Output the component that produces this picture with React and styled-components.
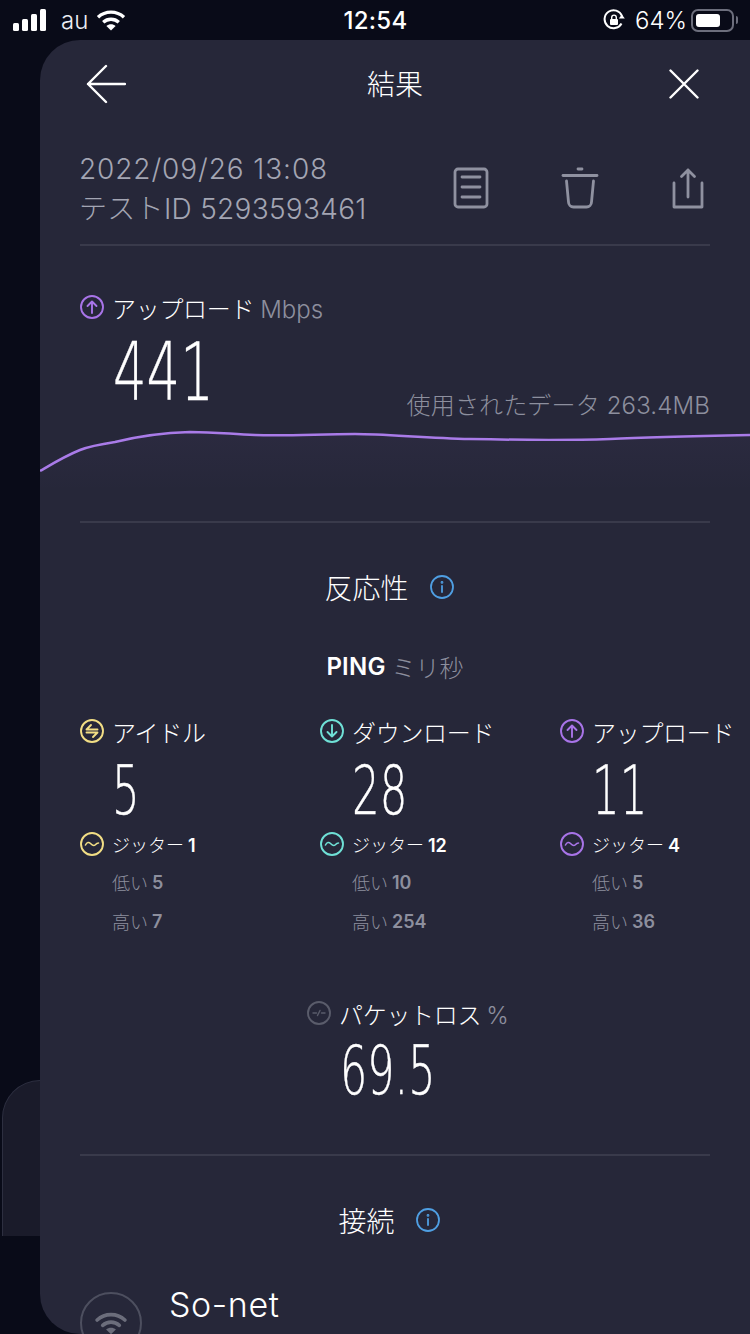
import styled, { createGlobalStyle } from "styled-components";

const GlobalStyle = createGlobalStyle`
  html, body {
    margin: 0;
    padding: 0;
    background: #090b18;
  }
  body {
    width: 750px;
    height: 1334px;
    overflow: hidden;
    font-family: "Inter", "Noto Sans CJK JP", sans-serif;
  }
`;

const Screen = styled.div`
  position: relative;
  width: 750px;
  height: 1334px;
  overflow: hidden;
  background: #090b18;
  color: #fff;
`;

const StatusBar = styled.div`
  display: grid;
  grid-template-columns: 1fr auto 1fr;
  align-items: center;
  height: 40px;
  padding: 0 12px 0 13px;
`;

const StatusLeft = styled.div`
  display: flex;
  align-items: center;
`;

const StatusRight = styled.div`
  display: flex;
  align-items: center;
  justify-content: flex-end;
`;

const Carrier = styled.span`
  margin: 0 8px 0 14px;
  font-size: 24px;
  font-weight: 300;
  color: #eceef4;
`;

const Clock = styled.span`
  font-size: 24px;
  font-weight: 500;
  letter-spacing: 0.3px;
`;

const BatteryPct = styled.span`
  margin: 0 4px 0 10px;
  font-size: 24px;
  font-weight: 300;
  letter-spacing: 0;
`;

const Battery = styled.div`
  display: flex;
  align-items: center;
  width: 43px;
  height: 23px;
  padding: 3px;
  box-sizing: border-box;
  border: 2px solid #6c6e7c;
  border-radius: 7px;
  &::before {
    content: "";
    display: block;
    width: 24px;
    height: 13px;
    background: #fff;
    border-radius: 3px;
  }
`;

const BatteryNub = styled.div`
  width: 2px;
  height: 8px;
  margin-left: 2px;
  border-radius: 0 2px 2px 0;
  background: #6c6e7c;
`;

const BehindCard = styled.div`
  position: absolute;
  left: 2px;
  top: 1080px;
  width: 60px;
  height: 156px;
  box-sizing: border-box;
  border: 1px solid #2d2f40;
  border-bottom: 0;
  border-radius: 38px 0 0 0;
  background: #1a1b2a;
`;

const Panel = styled.div`
  position: relative;
  box-sizing: border-box;
  margin-left: 40px;
  width: 710px;
  height: 1294px;
  padding: 0 40px;
  overflow: hidden;
  background: #262739;
  border-radius: 40px 0 0 40px;
`;

const NavBar = styled.div`
  display: grid;
  grid-template-columns: 1fr auto 1fr;
  align-items: center;
  height: 88px;
`;

const NavTitle = styled.div`
  font-size: 28px;
  font-weight: 300;
  margin-top: -2px;
`;

const NavEnd = styled.div`
  display: flex;
  justify-content: ${(p) => (p.$end ? "flex-end" : "flex-start")};
  padding: ${(p) => (p.$end ? "0 11px 0 0" : "0 0 0 6px")};
`;

const MetaRow = styled.div`
  display: flex;
  align-items: center;
  justify-content: space-between;
  height: 118px;
  padding-bottom: 3px;
  box-sizing: border-box;
  border-bottom: 2px solid #393a4b;
`;

const MetaText = styled.div`
  font-size: 28px;
  font-weight: 300;
  line-height: 40px;
  color: #a3a5b3;
  margin: 9px 0 0 -1px;
`;

const MetaLine = styled.div`
  letter-spacing: ${(p) => p.$spacing}px;
  white-space: nowrap;
`;

const MetaActions = styled.div`
  display: flex;
  align-items: center;
  gap: 72px;
  padding-right: 5px;
  margin-top: 6px;
`;

const UploadBlock = styled.div`
  padding-top: 44px;
`;

const Label = styled.div`
  display: flex;
  align-items: center;
  gap: 8px;
  height: 34px;
  font-size: 24px;
  font-weight: 300;
  letter-spacing: -0.3px;
  white-space: nowrap;
`;

const Unit = styled.span`
  color: #8d8f9e;
  font-size: 24px;
  font-weight: 300;
  letter-spacing: 0;
  margin-left: ${(p) => p.$gap || 0}px;
`;

const UploadRow = styled.div`
  display: flex;
  align-items: flex-end;
  justify-content: space-between;
  height: 98px;
`;

const Value = styled.div`
  display: inline-block;
  font-family: "DejaVu Sans", sans-serif;
  font-weight: 200;
  font-size: ${(p) => p.$size}px;
  line-height: ${(p) => p.$height}px;
  height: ${(p) => p.$height}px;
  transform: scaleX(${(p) => p.$scale});
  transform-origin: left center;
  white-space: nowrap;
  -webkit-text-stroke: 0.4px #fff;
`;

const BigValue = styled(Value)`
  align-self: flex-start;
  margin: 9px 0 0 33px;
`;

const DataUsed = styled.div`
  font-size: 24px;
  font-weight: 300;
  color: #8d8f9e;
  line-height: 32px;
  letter-spacing: 0.15px;
`;

const ChartWrap = styled.div`
  margin: 0 -40px;
  height: 99px;
`;

const Divider = styled.div`
  height: 2px;
  margin-top: ${(p) => p.$top || 0}px;
  background: #393a4b;
`;

const SectionTitle = styled.div`
  display: flex;
  align-items: center;
  justify-content: center;
  gap: 21px;
  height: 40px;
  margin-top: 44px;
  padding-right: 12px;
  font-size: 28px;
  font-weight: 300;
`;

const PingTitle = styled.div`
  display: flex;
  align-items: center;
  justify-content: center;
  gap: 6px;
  height: 30px;
  margin-top: 44px;
  font-size: 24px;
  font-weight: 600;
  letter-spacing: 0.2px;
`;

const PingGrid = styled.div`
  display: grid;
  grid-template-columns: repeat(3, 240px);
  margin-top: 33px;
`;

const PingColumn = styled.div`
  display: flex;
  flex-direction: column;
`;

const PingValue = styled(Value)`
  margin: 12px 0 0 32px;
`;

const Jitter = styled.div`
  display: flex;
  align-items: center;
  gap: 8px;
  height: 30px;
  margin-top: 7px;
  font-size: 18px;
  font-weight: 300;
`;

const Strong = styled.strong`
  font-weight: 600;
  margin-left: 4px;
`;

const Stat = styled.div`
  display: flex;
  align-items: center;
  height: 30px;
  margin-top: ${(p) => p.$top}px;
  padding-left: 32px;
  font-size: 18px;
  font-weight: 300;
  color: #8d8f9e;
`;

const PacketBlock = styled.div`
  display: flex;
  flex-direction: column;
  align-items: flex-start;
  margin-top: 60px;
  padding-left: 227px;
`;

const PacketValue = styled(Value)`
  margin: 10px 0 0 33px;
`;

const ConnectionRow = styled.div`
  display: flex;
  align-items: flex-start;
  gap: 27px;
  margin-top: 45px;
`;

const WifiBadge = styled.div`
  display: flex;
  align-items: center;
  justify-content: center;
  flex: none;
  width: 62px;
  height: 62px;
  box-sizing: border-box;
  margin-top: 7px;
  border: 2px solid #4d4f5f;
  border-radius: 50%;
`;

const Provider = styled.div`
  font-size: 34px;
  font-weight: 300;
  line-height: 40px;
  letter-spacing: 0.6px;
`;

const RingIcon = ({ color, kind }) => (
  <svg width="24" height="24" viewBox="0 0 24 24" fill="none" stroke={color} strokeWidth="1.9" strokeLinecap="round" strokeLinejoin="round" style={{ flex: "none" }}>
    <circle cx="12" cy="12" r="11" />
    {kind === "up" && <path d="M12 18V6.5M7.5 11 12 6.5l4.5 4.5" />}
    {kind === "down" && <path d="M12 6v11.5M7.5 13l4.5 4.5 4.5-4.5" />}
    {kind === "idle" && <path d="M17.5 10.5H6.5l4.5-4.5M6.5 13.5h11l-4.5 4.5" />}
    {kind === "wave" && <path d="M5.5 13c1.5-3 3.5-3 5-1.5s3.5 2.5 4.5 1.5 2-2 3.5-2" strokeWidth="1.6" />}
    {kind === "loss" && <path d="M6 12h3.5M14.5 12H18M10.5 14.5l2.5-5" strokeWidth="1.4" />}
  </svg>
);

const InfoIcon = () => (
  <svg width="24" height="24" viewBox="0 0 24 24" fill="none" stroke="#4f9fe3" strokeWidth="1.8" strokeLinecap="round">
    <circle cx="12" cy="12" r="11" />
    <path d="M12 11v6" />
    <circle cx="12" cy="7.4" r="0.5" fill="#4f9fe3" />
  </svg>
);

const SignalIcon = () => (
  <svg width="34" height="22" viewBox="0 0 34 22" fill="#fff">
    <rect x="0" y="14" width="6" height="8" rx="1.5" />
    <rect x="9" y="10" width="6" height="12" rx="1.5" />
    <rect x="18" y="5" width="6" height="17" rx="1.5" />
    <rect x="27" y="0" width="6" height="22" rx="1.5" />
  </svg>
);

const WifiIcon = ({ color = "#fff", width = 30, height = 22, cap = "butt" }) => (
  <svg width={width} height={height} viewBox="0 0 30 22" fill="none" stroke={color} strokeWidth="3.4" strokeLinecap={cap}>
    <path d="M2 8.2C9.4 1.4 20.6 1.4 28 8.2" />
    <path d="M7.2 13.2c4.5-4 11.1-4 15.6 0" />
    <path d="M15 21.5l-4.6-4.5c2.6-2.2 6.6-2.2 9.2 0z" fill={color} stroke="none" />
  </svg>
);

const RotationLockIcon = () => (
  <svg width="22" height="22" viewBox="0 0 22 22" fill="none" stroke="#fff" strokeWidth="2">
    <path d="M18.5 14.5A9 9 0 1 1 19 7" />
    <path d="M21.8 9.5h-6l3-4z" fill="#fff" stroke="none" />
    <rect x="7" y="10" width="8" height="6" rx="1" fill="#fff" stroke="none" />
    <path d="M8.7 10V8.4a2.3 2.3 0 0 1 4.6 0V10" strokeWidth="1.4" />
  </svg>
);

const BackIcon = () => (
  <svg width="40" height="40" viewBox="0 0 40 40" fill="none" stroke="#fff" strokeWidth="2.4" strokeLinecap="round" strokeLinejoin="round">
    <path d="M39 20H2M20 2 2 20l18 18" />
  </svg>
);

const CloseIcon = () => (
  <svg width="30" height="30" viewBox="0 0 30 30" fill="none" stroke="#fff" strokeWidth="2.4" strokeLinecap="round">
    <path d="M1.5 1.5l27 27M28.5 1.5l-27 27" />
  </svg>
);

const DocIcon = () => (
  <svg width="36" height="42" viewBox="0 0 36 42" fill="none" stroke="#8f91a0" strokeWidth="2.8" strokeLinecap="round" strokeLinejoin="round">
    <rect x="2" y="2" width="32" height="38" rx="3" />
    <path d="M9 10h18M9 20h18M9 30h18" />
  </svg>
);

const TrashIcon = () => (
  <svg width="38" height="42" viewBox="0 0 38 42" fill="none" stroke="#8f91a0" strokeWidth="2.8" strokeLinecap="round" strokeLinejoin="round">
    <path d="M2 8.5h34" />
    <path d="M17 2h4" />
    <path d="M5.5 14l2 21a5 5 0 0 0 5 5h13a5 5 0 0 0 5-5l2-21" />
  </svg>
);

const ShareIcon = () => (
  <svg width="34" height="42" viewBox="0 0 34 42" fill="none" stroke="#8f91a0" strokeWidth="2.8" strokeLinejoin="round" strokeLinecap="round">
    <path d="M3 16v24h28V16" />
    <path d="M17 30V3M10.5 9.5 17 3l6.5 6.5" />
  </svg>
);

const chartLine =
  "M0 40 C12 33 25 25 40 19 C50 15 62 13 75 11 C95 6 115 2 150 1 C175 1 190 3 215 4 C250 5 280 3 315 3 C345 3 385 7 430 8 C480 9 540 9 570 8 C610 6 660 5 710 4";

const columns = [
  { label: "アイドル", kind: "idle", color: "#f2de85", value: "5", jitter: 1, low: 5, high: 7 },
  { label: "ダウンロード", kind: "down", color: "#6fe0d6", value: "28", jitter: 12, low: 10, high: 254 },
  { label: "アップロード", kind: "up", color: "#a874e8", value: "11", jitter: 4, low: 5, high: 36 },
];

export default function App() {
  return (
    <Screen>
      <GlobalStyle />
      <StatusBar>
        <StatusLeft>
          <SignalIcon />
          <Carrier>au</Carrier>
          <WifiIcon />
        </StatusLeft>
        <Clock>12:54</Clock>
        <StatusRight>
          <RotationLockIcon />
          <BatteryPct>64%</BatteryPct>
          <Battery />
          <BatteryNub />
        </StatusRight>
      </StatusBar>
      <BehindCard />
      <Panel>
        <NavBar>
          <NavEnd>
            <BackIcon />
          </NavEnd>
          <NavTitle>結果</NavTitle>
          <NavEnd $end>
            <CloseIcon />
          </NavEnd>
        </NavBar>

        <MetaRow>
          <MetaText>
            <MetaLine $spacing={0.9}>2022/09/26 13:08</MetaLine>
            <MetaLine $spacing={0.3}>テストID 5293593461</MetaLine>
          </MetaText>
          <MetaActions>
            <DocIcon />
            <TrashIcon />
            <ShareIcon />
          </MetaActions>
        </MetaRow>

        <UploadBlock>
          <Label>
            <RingIcon color="#a874e8" kind="up" />
            <span>
              アップロード<Unit $gap={6}>Mbps</Unit>
            </span>
          </Label>
          <UploadRow>
            <BigValue $size={80} $height={80} $scale={0.66}>
              441
            </BigValue>
            <DataUsed>使用されたデータ 263.4MB</DataUsed>
          </UploadRow>
          <ChartWrap>
            <svg width="710" height="99" viewBox="0 -9 710 99" fill="none">
              <defs>
                <linearGradient id="chartFill" x1="0" y1="0" x2="0" y2="1">
                  <stop offset="0" stopColor="#a874e8" stopOpacity="0.04" />
                  <stop offset="1" stopColor="#a874e8" stopOpacity="0" />
                </linearGradient>
              </defs>
              <path d={`${chartLine} V60 H0 Z`} fill="url(#chartFill)" />
              <path d={chartLine} stroke="#a97be8" strokeWidth="2.5" />
            </svg>
          </ChartWrap>
        </UploadBlock>

        <Divider />

        <SectionTitle>
          反応性
          <InfoIcon />
        </SectionTitle>
        <PingTitle>
          PING <Unit>ミリ秒</Unit>
        </PingTitle>

        <PingGrid>
          {columns.map((c) => (
            <PingColumn key={c.label}>
              <Label>
                <RingIcon color={c.color} kind={c.kind} />
                {c.label}
              </Label>
              <PingValue $size={68} $height={62} $scale={0.64}>
                {c.value}
              </PingValue>
              <Jitter>
                <RingIcon color={c.color} kind="wave" />
                <span>
                  ジッター<Strong>{c.jitter}</Strong>
                </span>
              </Jitter>
              <Stat $top={8}>
                低い<Strong>{c.low}</Strong>
              </Stat>
              <Stat $top={9}>
                高い<Strong>{c.high}</Strong>
              </Stat>
            </PingColumn>
          ))}
        </PingGrid>

        <PacketBlock>
          <Label>
            <RingIcon color="#5a5c6b" kind="loss" />
            <span>
              パケットロス<Unit $gap={5}>%</Unit>
            </span>
          </Label>
          <PacketValue $size={68} $height={62} $scale={0.63}>
            69.5
          </PacketValue>
        </PacketBlock>

        <Divider $top={52} />

        <SectionTitle>
          接続
          <InfoIcon />
        </SectionTitle>

        <ConnectionRow>
          <WifiBadge>
            <WifiIcon color="#6b6d7b" width={32} height={24} cap="round" />
          </WifiBadge>
          <Provider>So-net</Provider>
        </ConnectionRow>
      </Panel>
    </Screen>
  );
}
